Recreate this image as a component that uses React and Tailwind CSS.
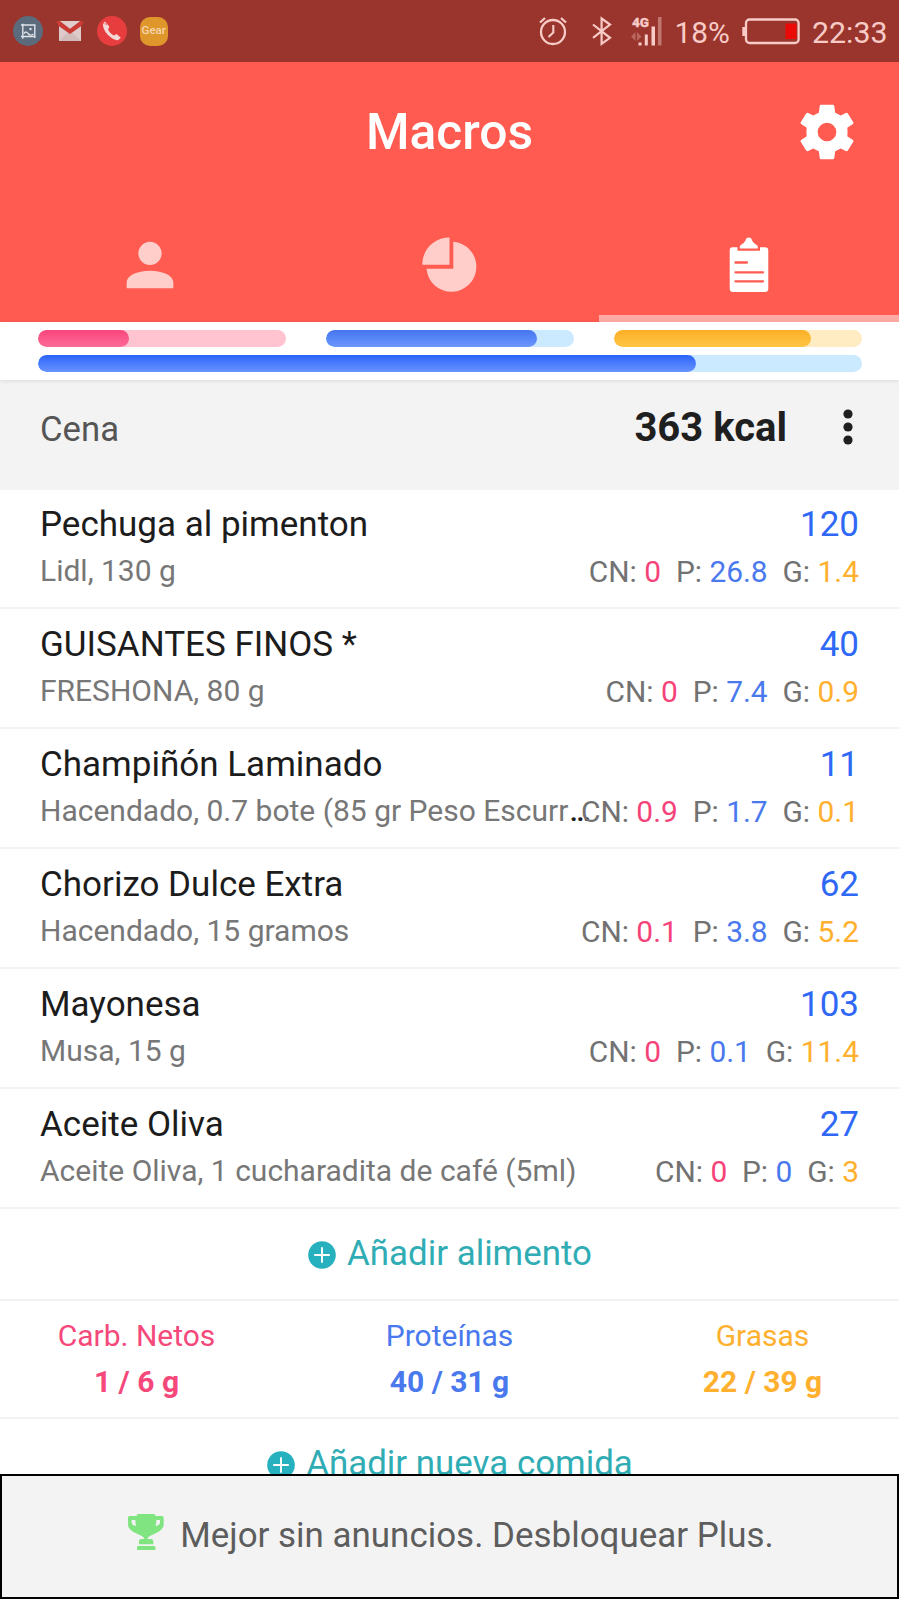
const foods = [
  { name: "Pechuga al pimenton", detail: "Lidl, 130 g", kcal: 120, cn: "0", p: "26.8", g: "1.4" },
  { name: "GUISANTES FINOS *", detail: "FRESHONA, 80 g", kcal: 40, cn: "0", p: "7.4", g: "0.9" },
  { name: "Champiñón Laminado", detail: "Hacendado, 0.7 bote (85 gr Peso Escurr", clipped: true, kcal: 11, cn: "0.9", p: "1.7", g: "0.1" },
  { name: "Chorizo Dulce Extra", detail: "Hacendado, 15 gramos", kcal: 62, cn: "0.1", p: "3.8", g: "5.2" },
  { name: "Mayonesa", detail: "Musa, 15 g", kcal: 103, cn: "0", p: "0.1", g: "11.4" },
  { name: "Aceite Oliva", detail: "Aceite Oliva, 1 cucharadita de café (5ml)", kcal: 27, cn: "0", p: "0", g: "3" },
];

function StatusBar() {
  return (
    <div className="flex h-[62px] shrink-0 items-center justify-between bg-[#99352d] pl-[11.500px] pr-[11.500px] text-[#f8cbc7]">
      <div className="flex h-[32px] items-center">
        {/* screenshot */}
        <svg className="mr-[12px] h-[32px] w-[32px]" viewBox="0 0 32 32" fill="none">
          <circle cx="16" cy="16" r="15" fill="#5b6b7c" />
          <path d="M10.800 8.700v15M9 10h13.800v13M9 21.500h14.200" stroke="#dfe2e8" strokeWidth="1.400" />
          <path d="M12 18.500c2-2.500 3-1.500 4.500.5s3.500 1 5 0" stroke="#dfe2e8" strokeWidth="1.300" />
          <circle cx="18.500" cy="14" r="1.200" fill="#dfe2e8" />
        </svg>
        {/* mail */}
        <svg className="mr-[12px] h-[32px] w-[28px]" viewBox="0 0 28 32">
          <path d="M3 6h22v20H3z" fill="#dccbca" />
          <path d="M3 26l9-9 2 1.500 2-1.500 9 9z" fill="#d2bcbb" />
          <path d="M0.500 7.500Q1 5.700 3.500 5.700L14 13.800 24.500 5.700Q27 5.700 27.500 7.500L25 11.200 14 19 3 11.200z" fill="#cb3b36" />
          <path d="M4.500 5.900H23.500L14 13.200z" fill="#e0cccb" />
        </svg>
        {/* call */}
        <svg className="mr-[12px] h-[32px] w-[32px]" viewBox="0 0 32 32">
          <circle cx="16" cy="16" r="15" fill="#e83d3e" />
          <path d="M6.700 8.800L9 6.500l2.400 3.200M7 8.500c-.5 3.500 1.500 8 5 11.500 3.200 3.200 7 5.500 10 5.200l2.800-2.500-4.200-3.800-2.700 1.500c-2.700-1-4.900-3.200-5.800-5.800l1.300-2.800L10.600 8.300z" fill="#f3dad9" />
        </svg>
        <div className="flex h-[29px] w-[28.500px] items-center justify-center rounded-[10px] bg-[#df962b] text-[11.500px] font-medium leading-none text-[#f5d5ae]">
          Gear
        </div>
      </div>
      <div className="flex h-[32px] items-center">
        {/* alarm */}
        <svg className="mr-[25px] h-[32px] w-[28px]" viewBox="0 0 28 32" fill="none" stroke="currentColor">
          <circle cx="14" cy="17" r="12" strokeWidth="2.300" />
          <path d="M14.300 10v7.500L9.500 22" strokeWidth="2.100" />
          <path d="M1 7.500L6 3M27 7.500L22 3" strokeWidth="2.300" />
        </svg>
        {/* bluetooth */}
        <svg className="mr-[19px] h-[32px] w-[20px]" viewBox="0 0 20 32" fill="none" stroke="currentColor" strokeWidth="2.200">
          <path d="M1 9.500L18 22.800L9.600 28.800V3.500L18 9.500L1 22.800" />
        </svg>
        <svg className="h-[32px] w-[31px]" viewBox="0 0 31 32">
          <text x="1" y="12" fontFamily="Roboto, sans-serif" fontSize="13.500" fontWeight="900" fill="currentColor" stroke="currentColor" strokeWidth="0.300">4G</text>
          <path d="M27 2h3.500v28.500H27z" fill="#c27670" />
          <path d="M20.500 11.500h3.500v19h-3.500zM13.800 19.500h3v11h-3zM7.500 27.500h3v3h-3z" fill="currentColor" />
          <path d="M0 21.500l4.500-4.500v9zM10.500 21.500l-4.500-4.500v9z" fill="#b9665f" />
        </svg>
        <span className="mt-[3px] ml-[13px] w-[57px] text-[29.800px] leading-[32px]">18%</span>
        {/* battery */}
        <svg className="mr-[12px] ml-[10.500px] h-[32px] w-[58px]" viewBox="0 0 58 32">
          <rect x="4" y="4.500" width="52.600" height="23.500" rx="3.500" fill="none" stroke="currentColor" strokeWidth="2.300" />
          <path d="M0.300 12H3.500V21H0.300z" fill="currentColor" />
          <path d="M43.500 8.500h11v15.500h-11z" fill="#ec0a08" />
        </svg>
        <span className="mt-[3px] text-[30.300px] leading-[32px]">22:33</span>
      </div>
    </div>
  );
}

function Header() {
  return (
    <header className="flex h-[260px] shrink-0 flex-col bg-[#ff5b50]">
      <div className="grid h-[138px] grid-cols-[100px_1fr_100px] items-center pt-[2px]">
        <span />
        <h1 className="text-center text-[49.800px] font-medium leading-[60px] text-white">Macros</h1>
        <svg className="h-[56px] w-[56px] justify-self-start" viewBox="-28 -28 56 56" fill="white" fillRule="evenodd">
          <path d="M-7.200 -26.300Q-7.100 -27.300 -6 -27.300H6Q7.100 -27.300 7.200 -26.300L8.200 -19.200Q11.500 -17.600 13.800 -16.600L19.200 -19.200Q20.400 -19.400 21 -18.300L26.300 -9.700Q26.800 -8.700 25.900 -8L20.300 -4.200Q20.900 0 20.300 4.200L25.900 8Q26.800 8.700 26.300 9.700L21 18.300Q20.400 19.400 19.200 19.200L13.800 16.600Q11.500 17.600 8.200 19.200L7.200 26.300Q7.100 27.300 6 27.300H-6Q-7.100 27.300 -7.200 26.300L-8.200 19.200Q-11.500 17.600 -13.800 16.600L-19.200 19.200Q-20.400 19.400 -21 18.300L-26.300 9.700Q-26.800 8.700 -25.900 8L-20.300 4.200Q-20.900 0 -20.300 -4.200L-25.900 -8Q-26.800 -8.700 -26.300 -9.700L-21 -18.300Q-20.400 -19.400 -19.200 -19.200L-13.800 -16.600Q-11.500 -17.600 -8.200 -19.200zM0 -9.300A9.300 9.300 0 1 0 0 9.300A9.300 9.300 0 1 0 0 -9.300z" />
        </svg>
      </div>
      <nav className="grid flex-1 grid-cols-3">
        <div className="flex justify-center pt-[29.500px]">
          <svg className="h-[70px] w-[70px]" viewBox="0 0 24 24" fill="#ffcecb">
            <path d="M12 12c2.210 0 4-1.790 4-4s-1.790-4-4-4-4 1.790-4 4 1.790 4 4 4zm0 2c-4.500 0-8 1.700-8 4v2h16v-2c0-2.300-3.500-4-8-4z" />
          </svg>
        </div>
        <div className="flex justify-center pt-[37px]">
          <svg className="h-[55px] w-[55px]" viewBox="0 0 55 55" fill="#ffcecb">
            <path d="M27.500 0.500V27.800H0.300C0.300 12.500 12 0.500 27.500 0.500z" />
            <path d="M31.300 4.800A25 25 0 1 1 4.500 31.800H31.300z" />
          </svg>
        </div>
        <div className="flex flex-col items-center justify-between pt-[37px]">
          <svg className="h-[56px] w-[40px]" viewBox="0 0 40 56">
            <path d="M3.500 10.200H8.500V13.800H31V10.200H36Q39.300 10.200 39.300 13.500V51.500Q39.300 55 36 55H4Q0.700 55 0.700 51.500V13.500Q0.700 10.200 3.500 10.200z" fill="white" />
            <path d="M10.800 11.500V9.500C11 7.500 16 6.500 16.800 2.500Q17.200 0.500 19.800 0.500T22.800 2.500C23.600 6.500 28.600 7.500 28.800 9.500V11.500z" fill="white" />
            <path d="M6.500 25.500H18M6.500 35.300H34M6.500 44.300H34" stroke="#ff5b50" strokeWidth="2.300" strokeLinecap="round" />
          </svg>
          <div className="h-[7px] w-full bg-[#ffaaa5]" />
        </div>
      </nav>
    </header>
  );
}

function Bar({ track, fill, value }) {
  return (
    <div className={`h-[17px] overflow-hidden rounded-full ${track}`}>
      <div className={`h-full rounded-full bg-linear-to-b ${fill}`} style={{ width: `${value}%` }} />
    </div>
  );
}

function PlusCircle() {
  return (
    <svg className="mt-[1px] h-[28px] w-[28px]" viewBox="0 0 28 28">
      <circle cx="14" cy="14" r="13.800" fill="#27b0bd" />
      <path d="M14 6.200V21.800M6.200 14H21.800" stroke="white" strokeWidth="1.900" />
    </svg>
  );
}

function FoodRow({ food }) {
  return (
    <li className="flex h-[120px] shrink-0 justify-between whitespace-nowrap border-b-2 border-[#f2f2f2] pt-[14px] pr-[40px] pl-[40px]">
      <div className="w-0 text-[#1c1c1c]">
        <div className="text-[35px] leading-[43px]">{food.name}</div>
        <div className="mt-[4px] text-[30px] leading-[41px]">
          <span className="text-[#777777]">{food.detail}</span>
          {food.clipped && <span className="ml-[1px] font-medium tracking-[1px]">…</span>}
        </div>
      </div>
      <div className="text-right">
        <div className="text-[35px] leading-[43px] text-[#2f68f5]">{food.kcal}</div>
        <div className="mt-[5px] whitespace-pre text-[29.900px] leading-[41px] text-[#727272]">
          {"CN: "}<span className="text-[#f5437a]">{food.cn}</span>
          {"  P: "}<span className="text-[#4a79ee]">{food.p}</span>
          {"  G: "}<span className="text-[#ffb02e]">{food.g}</span>
        </div>
      </div>
    </li>
  );
}

function Total({ label, value, color }) {
  return (
    <div className={`w-[160px] text-center text-[30px] ${color}`}>
      <div className="leading-[45px]">{label}</div>
      <div className="mt-[1px] font-bold leading-[45px]">{value}</div>
    </div>
  );
}

export default function App() {
  return (
    <div className="flex h-[1599px] w-[899px] flex-col overflow-hidden bg-white font-[Roboto,sans-serif]">
      <StatusBar />
      <Header />
      <section className="z-10 flex h-[58px] shrink-0 flex-col gap-[8px] bg-white px-[37.500px] pt-[7.500px] shadow-[0_1px_4px_rgba(0,0,0,0.1)]">
        <div className="grid grid-cols-3 gap-[40px]">
          <Bar track="bg-[#ffc4d0]" fill="from-[#f9447c] to-[#fd6a99]" value={37} />
          <Bar track="bg-[#cbe9ff]" fill="from-[#4575ee] to-[#6c97ff]" value={85.3} />
          <Bar track="bg-[#ffecc2]" fill="from-[#fbaf24] to-[#ffc545]" value={79.5} />
        </div>
        <Bar track="bg-[#cbe9ff]" fill="from-[#2a64f8] to-[#6892ff]" value={79.9} />
      </section>
      <section className="flex h-[110px] shrink-0 justify-between bg-[#f3f3f3] pl-[40px] pr-[45px] pt-[20px]">
        <h2 className="mt-[4px] text-[34.700px] leading-[50px] text-[#555555]">Cena</h2>
        <div className="flex gap-[55px]">
          <span className="mt-[1px] text-[40px] font-bold leading-[54px] text-[#1f1f1f]">363 kcal</span>
          <svg className="mt-[9px] h-[36px] w-[12px]" viewBox="0 0 12 36" fill="#1f1f1f">
            <circle cx="6" cy="5" r="4.600" />
            <circle cx="6" cy="18" r="4.600" />
            <circle cx="6" cy="31" r="4.600" />
          </svg>
        </div>
      </section>
      <ul className="-mt-px flex shrink-0 flex-col">
        {foods.map((food) => <FoodRow key={food.name} food={food} />)}
      </ul>
      <button className="flex h-[92px] shrink-0 items-center justify-center gap-[11px] border-b-2 border-[#f2f2f2] pl-[1px] text-[34.900px] leading-[44px] text-[#30adb4]">
        <PlusCircle />
        <span>Añadir alimento</span>
      </button>
      <section className="flex h-[118px] shrink-0 justify-between border-b-2 border-[#f2f2f2] px-[56.500px] pt-[12px]">
        <Total label="Carb. Netos" value="1 / 6 g" color="text-[#f5487b]" />
        <Total label="Proteínas" value="40 / 31 g" color="text-[#4a79ee]" />
        <Total label="Grasas" value="22 / 39 g" color="text-[#ffb02e]" />
      </section>
      <div className="h-[55px] shrink-0 overflow-hidden">
        <button className="flex h-[90px] w-full items-center justify-center gap-[11px] pl-[1px] text-[34.900px] leading-[44px] text-[#30adb4]">
          <PlusCircle />
          <span>Añadir nueva comida</span>
        </button>
      </div>
      <footer className="flex h-[125px] shrink-0 items-center justify-center gap-[16px] border-[2.500px] border-black bg-[#f3f3f3] pb-[2px] pl-[3px] text-[34.950px] leading-[44px] text-[#5d5d5d]">
        <svg className="mt-[-7px] h-[36px] w-[36px]" viewBox="385 972 108 108" fill="#80e480">
          <path d="M411 976Q411 972 418 972H460Q467 972 467 976V978H487Q492 978 492 983V1004C492 1016 478 1025 467 1030C459 1036 447 1038 444 1044V1047H454Q461 1047 461 1055V1063H418V1055Q418 1047 425 1047H433V1044C430 1038 418 1036 410 1030C399 1025 385 1016 385 1004V983Q385 978 390 978H411zM396 990V1000Q398 1006 409 1008Q407 1000 407 990zM481 990H470Q470 1000 468 1008Q479 1006 481 1000z" fillRule="evenodd" />
          <path d="M416 1068H463Q467 1068 467 1072V1080H412V1072Q412 1068 416 1068z" />
        </svg>
        <span>Mejor sin anuncios. Desbloquear Plus.</span>
      </footer>
    </div>
  );
}
